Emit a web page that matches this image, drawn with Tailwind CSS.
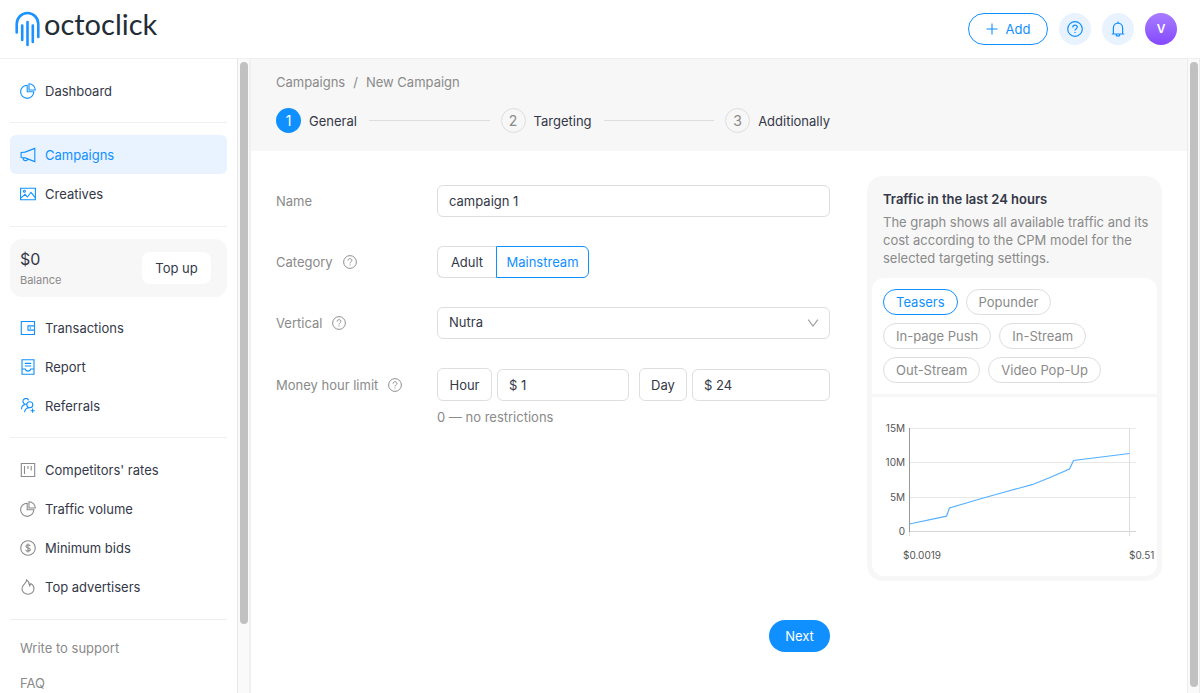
<!DOCTYPE html>
<html lang="en">

<head>
  <meta charset="UTF-8" />
  <meta name="viewport" content="width=device-width, initial-scale=1.0" />
  <script src="https://cdn.jsdelivr.net/npm/@tailwindcss/browser@4"></script>
  <title>New Campaign - octoclick</title>
</head>

<body class="flex h-screen flex-col overflow-hidden bg-white font-['Inter','Liberation_Sans',sans-serif] text-[13px] leading-[18px] text-[#343848]">

  <!-- Icons -->
  <svg class="hidden" xmlns="http://www.w3.org/2000/svg">
    <symbol id="i-pie" viewBox="0 0 16 16">
      <path d="M7.2 2.2A6.6 6.6 0 1 0 13.8 8.8H7.2Z" />
      <path d="M9 .7V7H15.3A6.4 6.4 0 0 0 9 .7Z" />
    </symbol>
    <symbol id="i-horn" viewBox="0 0 16 16">
      <path d="M1.1 5.5 5 5.1 14.8 1.4V14.6L5 10.9 1.1 10.5Z" />
      <path d="M3.3 10.8a2.3 2.3 0 0 0 4.5 1.1" />
    </symbol>
    <symbol id="i-picture" viewBox="0 0 16 16">
      <path d="M.6 2.2H15.4V13.8H.6Z" />
      <path d="M.8 12.2 5 8.4 7.3 11 11 6.4 15.2 11.6" />
      <circle cx="4.4" cy="5.2" r="1" />
    </symbol>
    <symbol id="i-wallet" viewBox="0 0 16 16">
      <path d="M14.5 5.6V1.5H1.3V14.5H14.5V10.4" />
      <path d="M14.5 5.9H8V10.1H14.5ZM10.3 7.3V8.7" />
    </symbol>
    <symbol id="i-report" viewBox="0 0 16 16">
      <path d="M2 .8H14V15.2H2ZM4.8 4.4H11.2M4.8 7H11.2" />
      <path d="M2 10H5.2A2.9 2.9 0 0 0 10.8 10H14" />
    </symbol>
    <symbol id="i-users" viewBox="0 0 16 16">
      <circle cx="9.8" cy="6.8" r="3" />
      <path d="M4.6 14.2C4.8 11.4 7 9.8 9.6 9.8M6.8 6.1A2.9 2.9 0 1 1 8.6 2.2M1.4 11.2C1.6 8.6 3 7 4.8 6.6M12.6 10.6V14.8M10.5 12.7H14.7" />
    </symbol>
    <symbol id="i-board" viewBox="0 0 16 16">
      <path d="M1.3 1.5H14.7V14.5H1.3ZM4.5 4V12M8 4V7M11.2 4V8.4" />
    </symbol>
    <symbol id="i-dollar" viewBox="0 0 16 16">
      <circle cx="8" cy="8" r="7.3" />
      <path d="M10.2 6.1C10 5.1 9.2 4.7 8 4.7S5.9 5.3 5.9 6.3C5.9 8.5 10.3 7.2 10.3 9.6 10.3 10.7 9.3 11.3 8 11.3S5.8 10.7 5.7 9.7M8 3.6V12.4" />
    </symbol>
    <symbol id="i-fire" viewBox="0 0 16 16">
      <path d="M6.6 .9C6.7 4.5 2 5.5 2 9.8A6 5.5 0 0 0 14 9.8C14 7.6 12.6 5.6 11 4.6L9.6 6.6C9.4 3.8 8.2 1.9 6.6 .9Z" />
    </symbol>
    <symbol id="i-help" viewBox="0 0 16 16">
      <circle cx="8" cy="8" r="7.3" />
      <path d="M5.8 6.4C5.8 5 6.8 4.2 8 4.2S10.2 5 10.2 6.2C10.2 7.7 8 7.8 8 9.6M8 10.9V12" />
    </symbol>
    <symbol id="i-bell" viewBox="0 0 16 16">
      <path d="M8 .4V2M1.8 13H14.2M3.4 13V6.7A4.6 4.6 0 0 1 12.6 6.7V13M6.1 13.3A1.9 1.9 0 0 0 9.9 13.3" />
    </symbol>
    <symbol id="i-plus" viewBox="0 0 12 12">
      <path d="M6 .5V11.5M.5 6H11.5" />
    </symbol>
    <symbol id="i-down" viewBox="0 0 12 12">
      <path d="M1.2 2.6 6 9 10.8 2.6" />
    </symbol>
  </svg>

  <!-- Header -->
  <header class="flex h-[59px] shrink-0 items-center justify-between border-b border-[#efefef] pr-[23px] pl-[15px]">
    <a href="#" class="flex items-center gap-1">
      <svg class="h-9 w-[25px]" viewBox="0 0 25 36" fill="none" stroke="#1b92ff" stroke-width="2.6" stroke-linecap="round">
        <path d="M1.7 21.5V13A10.8 11 0 0 1 23.3 13V26M7.2 14.5V29M12.5 11V34M17.8 14.5V31" />
      </svg>
      <span class="pb-[10px] font-['Lato','Liberation_Sans',sans-serif] text-[29px] leading-8 text-[#222d36]">octoclick</span>
    </a>
    <div class="flex items-center gap-[11px]">
      <button class="flex h-8 w-20 items-center justify-center gap-2 rounded-full border border-[#1090ff] text-[#1090ff]">
        <svg class="size-3" fill="none" stroke="currentColor" stroke-width="1.1"><use href="#i-plus" /></svg>
        Add
      </button>
      <button aria-label="Help" class="flex size-8 items-center justify-center rounded-full bg-[#e9f2ff] text-[#1090ff]">
        <svg class="size-4" fill="none" stroke="currentColor" stroke-width="1.2"><use href="#i-help" /></svg>
      </button>
      <button aria-label="Notifications" class="flex size-8 items-center justify-center rounded-full bg-[#e9f2ff] text-[#1090ff]">
        <svg class="size-4" fill="none" stroke="currentColor" stroke-width="1.2"><use href="#i-bell" /></svg>
      </button>
      <button class="size-8 rounded-full bg-linear-to-b from-[#a97bff] to-[#8447ff] text-xs font-semibold text-white">V</button>
    </div>
  </header>

  <div class="flex min-h-0 flex-1">

    <!-- Sidebar -->
    <aside class="w-[238px] shrink-0 overflow-hidden border-r border-[#e6e6e6] px-[10px] pt-3 whitespace-nowrap">
      <nav>
        <a href="#" class="flex h-[39px] items-center gap-[9px] px-[10px]">
          <svg class="size-4 text-[#1090ff]" fill="none" stroke="currentColor" stroke-width="1.1"><use href="#i-pie" /></svg>Dashboard
        </a>
        <hr class="my-3 border-[#efefef]" />
        <a href="#" class="flex h-[39px] items-center gap-[9px] rounded-md bg-[#e9f2ff] px-[10px] text-[#1090ff]">
          <svg class="size-4" fill="none" stroke="currentColor" stroke-width="1.1"><use href="#i-horn" /></svg>Campaigns
        </a>
        <a href="#" class="flex h-[39px] items-center gap-[9px] px-[10px]">
          <svg class="size-4 text-[#1090ff]" fill="none" stroke="currentColor" stroke-width="1.1"><use href="#i-picture" /></svg>Creatives
        </a>
        <hr class="mt-[13px] mb-3 border-[#efefef]" />
        <div class="mb-[11px] flex h-[58px] items-center justify-between rounded-xl bg-[#f7f7f7] pr-4 pl-[10px]">
          <div>
            <div class="text-base leading-6">$0</div>
            <div class="text-[11px] text-[#8a8a8a]">Balance</div>
          </div>
          <button class="h-8 w-[69px] rounded-lg bg-white">Top up</button>
        </div>
        <a href="#" class="flex h-[39px] items-center gap-[9px] px-[10px]">
          <svg class="size-4 text-[#1090ff]" fill="none" stroke="currentColor" stroke-width="1.1"><use href="#i-wallet" /></svg>Transactions
        </a>
        <a href="#" class="flex h-[39px] items-center gap-[9px] px-[10px]">
          <svg class="size-4 text-[#1090ff]" fill="none" stroke="currentColor" stroke-width="1.1"><use href="#i-report" /></svg>Report
        </a>
        <a href="#" class="flex h-[39px] items-center gap-[9px] px-[10px]">
          <svg class="size-4 text-[#1090ff]" fill="none" stroke="currentColor" stroke-width="1.1"><use href="#i-users" /></svg>Referrals
        </a>
        <hr class="my-3 border-[#efefef]" />
        <a href="#" class="flex h-[39px] items-center gap-[9px] px-[10px]">
          <svg class="size-4 text-[#8a8a8a]" fill="none" stroke="currentColor" stroke-width="1.1"><use href="#i-board" /></svg>Competitors' rates
        </a>
        <a href="#" class="flex h-[39px] items-center gap-[9px] px-[10px]">
          <svg class="size-4 text-[#8a8a8a]" fill="none" stroke="currentColor" stroke-width="1.1"><use href="#i-pie" /></svg>Traffic volume
        </a>
        <a href="#" class="flex h-[39px] items-center gap-[9px] px-[10px]">
          <svg class="size-4 text-[#8a8a8a]" fill="none" stroke="currentColor" stroke-width="1.1"><use href="#i-dollar" /></svg>Minimum bids
        </a>
        <a href="#" class="flex h-[39px] items-center gap-[9px] px-[10px]">
          <svg class="size-4 text-[#8a8a8a]" fill="none" stroke="currentColor" stroke-width="1.1"><use href="#i-fire" /></svg>Top advertisers
        </a>
        <hr class="mt-[13px] mb-[10px] border-[#efefef]" />
        <a href="#" class="flex h-[35px] items-center px-[10px] text-[#8a8a8a]">Write to support</a>
        <a href="#" class="flex h-[35px] items-center px-[10px] text-[#8a8a8a]">FAQ</a>
      </nav>
    </aside>
    <div class="w-[13px] shrink-0 border-r-2 border-[#f0f0f0] bg-[#fafafa] pt-[3px] pl-[2px]">
      <div class="h-[89%] w-2 rounded-full bg-[#c1c1c1]"></div>
    </div>

    <!-- Content -->
    <main class="flex min-w-0 flex-1 flex-col">
      <div class="h-[92px] shrink-0 bg-[#f7f7f7] px-[25px] pt-[14px]">
        <nav class="flex gap-2 text-[#8a8a8a]">
          <a href="#">Campaigns</a><span>/</span><span>New Campaign</span>
        </nav>
        <ol class="mt-[17px] mr-[332px] flex">
          <li class="flex flex-1 items-center pr-[11px]">
            <span class="flex size-[25px] items-center justify-center rounded-full bg-[#1090ff] text-sm text-white">1</span>
            <span class="ml-2">General</span>
            <span class="ml-3 h-px flex-1 bg-[#dedede]"></span>
          </li>
          <li class="flex flex-1 items-center pr-[11px]">
            <span class="flex size-[25px] items-center justify-center rounded-full border border-[#dedede] text-sm text-[#8a8a8a]">2</span>
            <span class="ml-2">Targeting</span>
            <span class="ml-3 h-px flex-1 bg-[#dedede]"></span>
          </li>
          <li class="flex items-center">
            <span class="flex size-[25px] items-center justify-center rounded-full border border-[#dedede] text-sm text-[#8a8a8a]">3</span>
            <span class="ml-2">Additionally</span>
          </li>
        </ol>
      </div>

      <div class="flex items-start gap-[37px] px-[25px] pt-[25px]">
        <form class="flex min-w-0 flex-1 flex-col pt-[9px]">
          <div class="mb-[29px] flex items-center">
            <label for="name" class="w-[161px] shrink-0 text-[#8a8a8a]">Name</label>
            <input id="name" type="text" value="campaign 1" class="h-8 min-w-0 flex-1 rounded-md border border-[#dedede] px-[11px]" />
          </div>

          <div class="mb-[29px] flex items-center" role="radiogroup" aria-labelledby="category">
            <span id="category" class="flex w-[161px] shrink-0 items-center gap-[10px] text-[#8a8a8a]">
              Category
              <svg class="size-[14px]" fill="none" stroke="currentColor" stroke-width="1.1"><use href="#i-help" /></svg>
            </span>
            <label class="flex h-8 w-[59px] items-center justify-center rounded-l-md border border-r-0 border-[#dedede]">
              <input type="radio" name="category" class="sr-only" />Adult
            </label>
            <label class="flex h-8 w-[93px] items-center justify-center rounded-r-md border border-[#1090ff] text-[#1090ff]">
              <input type="radio" name="category" class="sr-only" checked />Mainstream
            </label>
          </div>

          <div class="mb-[29px] flex items-center">
            <label for="vertical" class="flex w-[161px] shrink-0 items-center gap-[10px] text-[#8a8a8a]">
              Vertical
              <svg class="size-[14px]" fill="none" stroke="currentColor" stroke-width="1.1"><use href="#i-help" /></svg>
            </label>
            <div class="relative min-w-0 flex-1">
              <select id="vertical" class="block h-8 w-full appearance-none rounded-md border border-[#dedede] bg-white px-[11px] pb-[2px]">
                <option>Nutra</option>
              </select>
              <svg class="pointer-events-none absolute top-[10px] right-[11px] size-3 text-[#9a9a9a]" fill="none" stroke="currentColor" stroke-width="1.1"><use href="#i-down" /></svg>
            </div>
          </div>

          <div class="flex items-center">
            <span class="flex w-[161px] shrink-0 items-center gap-[10px] text-[#8a8a8a]">
              Money hour limit
              <svg class="size-[14px]" fill="none" stroke="currentColor" stroke-width="1.1"><use href="#i-help" /></svg>
            </span>
            <label for="hour" class="flex h-[33px] w-[55px] items-center justify-center rounded-md border border-[#dedede]">Hour</label>
            <input id="hour" type="text" value="$ 1" class="ml-[5px] h-8 w-[132px] rounded-md border border-[#dedede] px-[11px]" />
            <label for="day" class="ml-[10px] flex h-[33px] w-[48px] items-center justify-center rounded-md border border-[#dedede]">Day</label>
            <input id="day" type="text" value="$ 24" class="ml-[5px] h-8 min-w-0 flex-1 rounded-md border border-[#dedede] px-[11px]" />
          </div>
          <p class="mt-[7px] pl-[161px] text-[#8a8a8a]">0 — no restrictions</p>

          <button type="button" class="mt-[194px] h-8 w-[61px] self-end rounded-full bg-[#1090ff] text-white">Next</button>
        </form>

        <!-- Traffic card -->
        <section class="w-[295px] shrink-0 rounded-2xl bg-[#f7f7f7] p-[5px] pt-[14px]">
          <div class="pb-[11px] pl-[11px]">
            <h2 class="font-semibold">Traffic in the last 24 hours</h2>
            <p class="mt-[5px] text-[#8a8a8a]">The graph shows all available traffic and its cost according to the CPM model for the selected targeting settings.</p>
          </div>
          <div class="rounded-xl bg-white">
            <div class="flex flex-wrap gap-2 border-b-3 border-[#f7f7f7] px-[11px] pt-[11px] pb-[11px]">
              <button class="h-[26px] rounded-full border border-[#1090ff] px-3 text-[#1090ff]">Teasers</button>
              <button class="h-[26px] rounded-full border border-[#dedede] px-3 text-[#8a8a8a]">Popunder</button>
              <button class="h-[26px] rounded-full border border-[#dedede] px-3 text-[#8a8a8a]">In-page Push</button>
              <button class="h-[26px] rounded-full border border-[#dedede] px-3 text-[#8a8a8a]">In-Stream</button>
              <button class="h-[26px] rounded-full border border-[#dedede] px-3 text-[#8a8a8a]">Out-Stream</button>
              <button class="h-[26px] rounded-full border border-[#dedede] px-3 text-[#8a8a8a]">Video Pop-Up</button>
            </div>
            <svg class="block w-full" viewBox="0 0 285 179" fill="none">
              <path d="M37 31.5H264M37 65.5H264M37 100.5H264" stroke="#e8e8e8" />
              <path d="M37 134.5H264" stroke="#d4d4d4" />
              <path d="M257.5 31V139M37.5 134V139" stroke="#dcdcdc" />
              <path d="M37.5 31V135" stroke="#999999" />
              <path d="M37.5 127 74.5 119.2 77.5 111 107 102.2 131 95.5 160 87.7 178 80.5 197.5 72 201.5 63.5 257.5 56.5" stroke="#55b0ff" stroke-width="1.2" />
              <g class="fill-[#555555] text-[10px]">
                <text x="33" y="35" text-anchor="end">15M</text>
                <text x="33" y="69" text-anchor="end">10M</text>
                <text x="33" y="104" text-anchor="end">5M</text>
                <text x="33" y="138" text-anchor="end">0</text>
                <text x="31" y="162">$0.0019</text>
                <text x="257" y="162">$0.51</text>
              </g>
            </svg>
          </div>
        </section>
      </div>
    </main>
    <div class="w-[13px] shrink-0 border-x border-[#ececec] bg-[#fafafa] pt-[3px] pl-[2px]">
      <div class="h-[99%] w-2 rounded-full bg-[#c1c1c1]"></div>
    </div>
  </div>
</body>

</html>
